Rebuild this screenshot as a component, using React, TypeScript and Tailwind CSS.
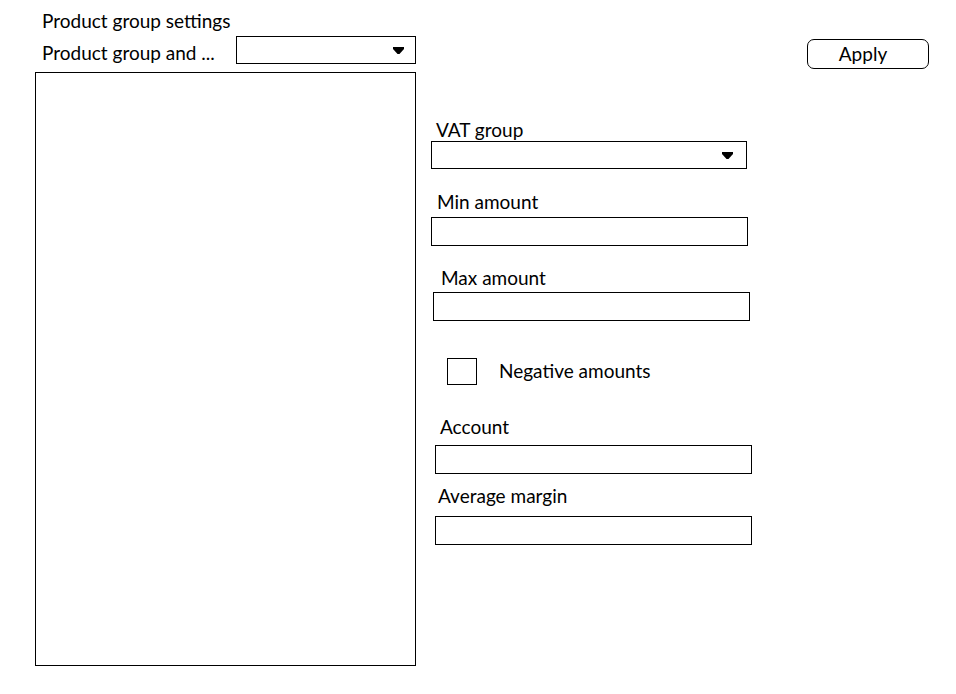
import React from 'react';

const Arrow = () => (
  <svg width="11" height="7" viewBox="0 0 11 7" className="block">
    <polygon points="0,0 11,0 11,2 6.5,7 4.5,7 0,2" fill="#000" />
  </svg>
);

const Select = ({ className }: { className: string }) => (
  <div className={`flex items-center justify-end border border-black bg-white ${className}`}>
    <Arrow />
  </div>
);

const Field = ({ className }: { className: string }) => (
  <div className={`border border-black bg-white ${className}`} />
);

export default function App() {
  return (
    <div className="flex w-[956px] h-[694px] bg-white text-black text-[19px] leading-[22px] font-['Lato',sans-serif]">
      <div className="ml-[35px] w-[381px] flex flex-col">
        <div className="mt-[10px] ml-[7px] h-[22px]">Product group settings</div>
        <div className="mt-[4px] flex h-[28px]">
          <span className="ml-[7px] mt-[6px] w-[194px] h-[22px]">Product group and ...</span>
          <Select className="w-[180px] h-[28px] pr-[11px]" />
        </div>
        <div className="mt-[8px] h-[594px] border border-black" />
      </div>

      <div className="ml-[15px] w-[322px] flex flex-col">
        <span className="mt-[119px] ml-[5px] h-[22px]">VAT group</span>
        <Select className="mt-[0px] w-[316px] h-[28px] pr-[13px]" />

        <span className="mt-[22px] ml-[6px] h-[22px]">Min amount</span>
        <Field className="mt-[4px] w-[317px] h-[29px]" />

        <span className="mt-[21px] ml-[10px] h-[22px]">Max amount</span>
        <Field className="mt-[3px] ml-[2px] w-[317px] h-[29px]" />

        <div className="mt-[37px] ml-[16px] flex items-start h-[27px]">
          <div className="w-[30px] h-[27px] border border-black" />
          <span className="ml-[22px] mt-[2px]">Negative amounts</span>
        </div>

        <span className="mt-[31px] ml-[9px] h-[22px]">Account</span>
        <Field className="mt-[7px] ml-[4px] w-[317px] h-[29px]" />

        <span className="mt-[11px] ml-[7px] h-[22px]">Average margin</span>
        <Field className="mt-[9px] ml-[4px] w-[317px] h-[29px]" />
      </div>

      <div className="ml-auto mr-[27px] mt-[39px]">
        <button className="w-[122px] h-[30px] border border-black rounded-[7px] bg-white pr-[10px] text-[19px] leading-[22px]">
          Apply
        </button>
      </div>
    </div>
  );
}
